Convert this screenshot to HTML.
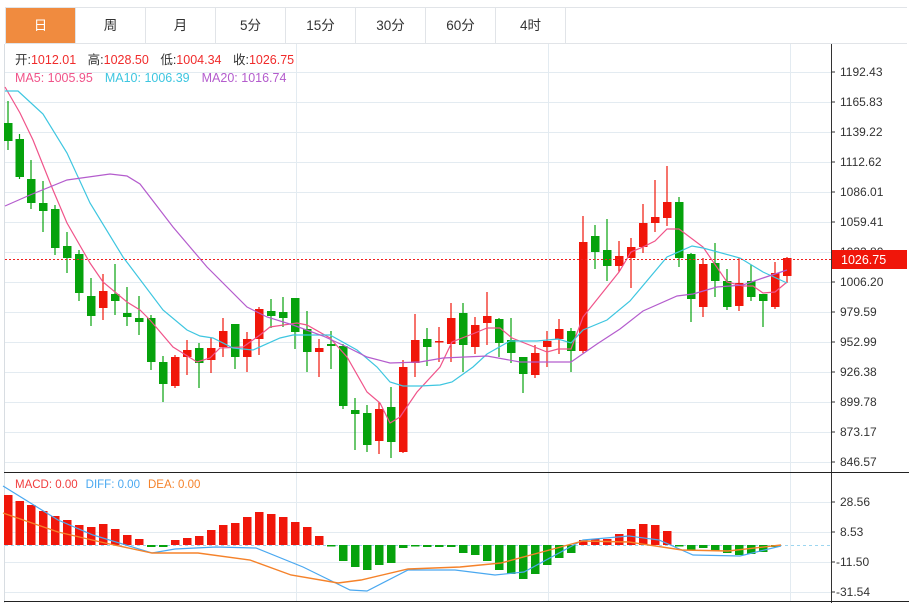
<!DOCTYPE html>
<html><head><meta charset="utf-8"><style>
body{margin:0;width:909px;height:603px;background:#fff;overflow:hidden;font-family:"Liberation Sans","Noto Sans CJK SC",sans-serif}
.tabs{position:absolute;left:5px;top:7px;width:901px;height:35px;border:1px solid #e1e4e8;border-right:none;display:flex}
.tab{width:69px;border-right:1px solid #e1e4e8;text-align:center;line-height:35px;font-size:13.5px;color:#333}
.tab.a{background:#f08b3f;color:#fff}
svg{position:absolute;left:0;top:0}
</style></head><body>
<div class="tabs"><div class="tab a">日</div><div class="tab">周</div><div class="tab">月</div><div class="tab">5分</div><div class="tab">15分</div><div class="tab">30分</div><div class="tab">60分</div><div class="tab">4时</div></div>
<svg width="909" height="603" id="s" font-family="Liberation Sans, Noto Sans CJK SC, sans-serif">
<g stroke="#e3ebf1" stroke-width="1" id="grid"></g>
<line x1="4.5" y1="44" x2="4.5" y2="603" stroke="#d8dde2"/>
<line x1="831.5" y1="44" x2="831.5" y2="603" stroke="#333"/>
<line x1="4" y1="472.5" x2="909" y2="472.5" stroke="#222"/>
<line x1="4" y1="601.5" x2="909" y2="601.5" stroke="#222"/>
<g id="c"></g>
<polyline fill="none" stroke="#f0548a" stroke-width="1.2" points="5,87 20,113 33,140 53,190 67,223 90,263 103,282 127,302 140,310 150,320 173,347 197,362 210,358 220,348 243,347 260,335 270,327 297,323 307,325 330,338 347,357 367,392 380,403 390,423 400,417 417,392 440,367 452,342 475,333 487,328 500,328 512,338 547,352 558,349 571,349 583,317 595,302 619,272 631,252 643,247 655,241 667,229 679,229 703,247 727,282 743,286 753,286 763,293 775,292 787,282"/>
<polyline fill="none" stroke="#3ec6e0" stroke-width="1.2" points="5,91 18,91 43,114 67,153 90,203 123,257 163,310 187,330 200,336 213,338 233,348 253,350 280,338 293,335 330,335 357,350 377,367 390,382 403,386 420,386 440,385 452,382 473,367 487,354 510,341 537,341 558,339 571,343 583,330 607,320 630,301 667,257 692,246 703,248 740,258 763,272 787,283"/>
<polyline fill="none" stroke="#b45ccd" stroke-width="1.2" points="5,206 30,195 67,180 110,174 127,176 140,184 173,227 207,267 247,307 267,317 293,325 323,336 347,347 367,357 390,363 420,362 443,358 487,356 520,362 571,362 597,344 620,329 643,311 677,296 693,294 717,287 743,285 763,278 787,270"/>
<line x1="5" y1="259.5" x2="831" y2="259.5" stroke="#f02020" stroke-dasharray="2,2"/>
<text x="840" y="256" font-size="12" fill="#333">1032.80</text>
<line x1="831" y1="252" x2="835" y2="252" stroke="#333"/>
<rect x="832" y="250" width="75" height="19" fill="#f0160a"/>
<text x="841" y="264" fill="#fff" font-size="12.5">1026.75</text>
<line x1="5" y1="545.5" x2="831" y2="545.5" stroke="#9cd6f0" stroke-dasharray="3,3"/>
<g id="m"></g>
<polyline fill="none" stroke="#4aa8f0" stroke-width="1.2" points="3,486 58,520 93,535 152,553 175,549 216,547 256,548 303,567 350,590 367,591 408,570 455,570 495,575 524,572 583,540 629,536 659,540 693,555 740,556 781,546"/>
<polyline fill="none" stroke="#f5822a" stroke-width="1.4" points="3,513 58,532 105,543 152,553 198,553 250,560 291,575 338,583 361,580 408,569 460,567 501,563 542,552 583,541 629,542 682,550 728,551 781,545"/>
<text x="15" y="64" font-size="12.5" fill="#333">开:<tspan fill="#f02b2b">1012.01</tspan>  <tspan dx="8">高:</tspan><tspan fill="#f02b2b">1028.50</tspan> <tspan dx="8">低:</tspan><tspan fill="#f02b2b">1004.34</tspan> <tspan dx="8">收:</tspan><tspan fill="#f02b2b">1026.75</tspan></text>
<text x="15" y="82" font-size="12.5"><tspan fill="#f0548a">MA5: 1005.95</tspan><tspan dx="12" fill="#3ec6e0">MA10: 1006.39</tspan><tspan dx="12" fill="#b45ccd">MA20: 1016.74</tspan></text>
<text x="15" y="488" font-size="11.5"><tspan fill="#f03c3c">MACD: 0.00</tspan><tspan dx="8" fill="#4aa8f0">DIFF: 0.00</tspan><tspan dx="8" fill="#f5822a">DEA: 0.00</tspan></text>
<g font-size="12" fill="#333">
<text x="840" y="76">1192.43</text><text x="840" y="106">1165.83</text><text x="840" y="136">1139.22</text><text x="840" y="166">1112.62</text><text x="840" y="196">1086.01</text><text x="840" y="226">1059.41</text><text x="840" y="286">1006.20</text><text x="840" y="316">979.59</text><text x="840" y="346">952.99</text><text x="840" y="376">926.38</text><text x="840" y="406">899.78</text><text x="840" y="436">873.17</text><text x="840" y="466">846.57</text>
<text x="840" y="506">28.56</text><text x="840" y="536">8.53</text><text x="836" y="566">-11.50</text><text x="836" y="596">-31.54</text>
</g>
<g stroke="#333"><line x1="831" y1="72" x2="835" y2="72"/><line x1="831" y1="102" x2="835" y2="102"/><line x1="831" y1="132" x2="835" y2="132"/><line x1="831" y1="162" x2="835" y2="162"/><line x1="831" y1="192" x2="835" y2="192"/><line x1="831" y1="222" x2="835" y2="222"/><line x1="831" y1="282" x2="835" y2="282"/><line x1="831" y1="312" x2="835" y2="312"/><line x1="831" y1="342" x2="835" y2="342"/><line x1="831" y1="372" x2="835" y2="372"/><line x1="831" y1="402" x2="835" y2="402"/><line x1="831" y1="432" x2="835" y2="432"/><line x1="831" y1="462" x2="835" y2="462"/><line x1="831" y1="502" x2="835" y2="502"/><line x1="831" y1="532" x2="835" y2="532"/><line x1="831" y1="562" x2="835" y2="562"/><line x1="831" y1="592" x2="835" y2="592"/></g>
</svg>
<script>
var NS="http://www.w3.org/2000/svg";
function el(p,t,a){var e=document.createElementNS(NS,t);for(var k in a)e.setAttribute(k,a[k]);p.appendChild(e);return e;}
var g=document.getElementById('grid');
[72,102,132,162,192,222,252,282,312,342,372,402,432,462].forEach(function(y){el(g,'line',{x1:5,x2:831,y1:y+.5,y2:y+.5});});
[502,532,562,592].forEach(function(y){el(g,'line',{x1:5,x2:831,y1:y+.5,y2:y+.5});});
[296,548,790].forEach(function(x){el(g,'line',{x1:x+.5,x2:x+.5,y1:44,y2:601});});
var C=[[8,0,123,141,101,150],[19.5,0,139,177,134,179],[31,0,179,203,160,209],[43,0,203,211,181,232],[55,0,209,248,205,255],[67,0,246,258,232,273],[79,0,254,293,250,301],[91,0,296,316,278,326],[103,1,291,308,274,320],[115,0,294,301,264,315],[127,0,313,317,287,326],[139,0,318,322,296,335],[151,0,318,362,315,370],[163,0,362,384,356,402],[175,1,357,386,355,388],[187,1,350,357,340,375],[199,0,348,363,343,388],[211,1,348,360,338,373],[223,1,331,347,318,357],[235,0,324,357,324,369],[247,1,339,357,332,372],[259,1,309,339,307,355],[271,0,311,316,299,328],[283,0,312,318,297,327],[295,0,298,332,298,349],[307,0,329,352,311,372],[319,1,348,352,339,377],[331,0,344,346,331,369],[343,0,346,406,344,409],[355,0,410,414,398,450],[367,0,413,445,405,452],[379,1,409,441,402,454],[391,0,407,442,387,458],[403,1,367,452,360,453],[415,1,340,363,314,377],[427,0,339,347,328,366],[439,1,341,342,327,362],[451,1,318,344,303,362],[463,0,313,345,303,372],[475,1,325,347,317,354],[487,1,316,323,292,345],[499,0,319,343,318,357],[511,0,340,353,318,363],[523,0,357,374,357,393],[535,1,353,375,345,378],[547,1,341,347,331,367],[559,1,329,339,319,354],[571,0,331,351,328,372],[583,1,242,351,216,353],[595,0,236,252,225,269],[607,0,250,266,219,281],[619,1,256,266,241,272],[631,1,247,258,238,288],[643,1,223,247,204,253],[655,1,217,223,180,232],[667,1,202,218,166,226],[679,0,202,258,197,267],[691,0,254,299,253,322],[703,1,264,307,258,317],[715,0,263,281,243,297],[727,0,281,307,269,310],[739,1,283,306,258,311],[751,0,281,297,265,301],[763,0,294,301,294,327],[775,1,273,307,262,309],[787,1,258,276,257,283]];
var c=document.getElementById('c');
C.forEach(function(d){var col=d[1]?'#f0160a':'#06a20c';el(c,'line',{x1:d[0],x2:d[0],y1:d[4],y2:d[5],stroke:col,'stroke-width':1.2});el(c,'rect',{x:d[0]-4,y:d[2],width:8.5,height:Math.max(1.5,d[3]-d[2]),fill:col});});
var M=[495,501,505,511,516,520,525,527,524,529,535,539,547,547,540,538,536,530,525,523,517,512,514,517,522,527,536,545,561,567,570,565,563,548,546,547,547,547,553,555,561,570,574,579,574,565,558,553,540,539,539,534,529,524,525,531,545,550,548,551,553,555,554,552,547];
var m=document.getElementById('m');
C.forEach(function(d,i){var y=M[i];if(y==undefined)return;var z=545;if(y<z)el(m,'rect',{x:d[0]-4,y:y,width:8.5,height:z-y,fill:'#f0160a'});else el(m,'rect',{x:d[0]-4,y:z,width:8.5,height:Math.max(1.5,y-z),fill:'#06a20c'});});
</script>
</body></html>
